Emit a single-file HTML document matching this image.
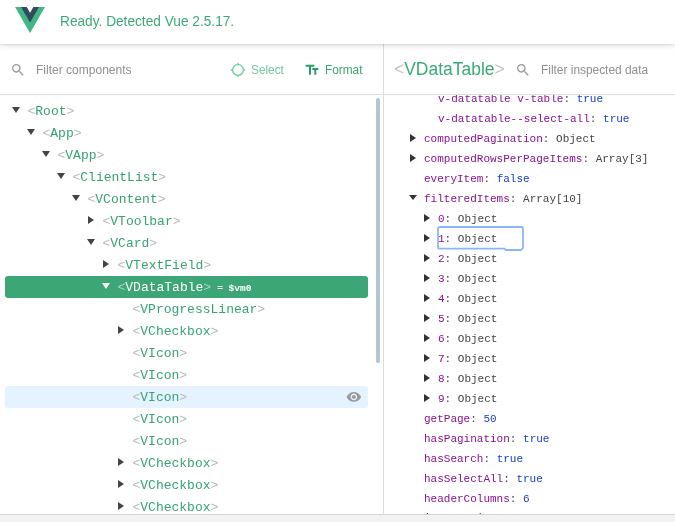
<!DOCTYPE html>
<html><head><meta charset="utf-8"><style>
*{margin:0;padding:0;box-sizing:border-box}
html,body{width:675px;height:522px;overflow:hidden;background:#fff}
body{position:relative;font-family:"Liberation Sans",sans-serif}
#wrap{position:absolute;left:0;top:0;width:675px;height:522px;will-change:transform;background:#fff}
.abs{position:absolute}
#hdr{position:absolute;left:0;top:0;width:675px;height:44px;background:#fff;box-shadow:0 1px 0 rgba(0,0,0,.04),0 0 7px rgba(0,0,0,.22);z-index:5}
#logo{position:absolute;left:15.3px;top:7px;width:30.1px;height:26px}
#ready{position:absolute;left:60px;top:11px;font-size:15px;line-height:20px;color:#3aab76;white-space:nowrap;transform:scaleX(.912);transform-origin:0 0}
.sx{position:absolute;white-space:nowrap;transform-origin:0 0;transform:scaleX(.91)}
.ph{color:#8f8f8f;font-size:13px;line-height:16px}
.ic{position:absolute;width:16px;height:16px}
#vline{position:absolute;left:383px;top:44px;width:1px;height:470px;background:#dcdcdc}
#hline{position:absolute;left:0;top:94px;width:675px;height:1px;background:#e0e0e0}
#tree{position:absolute;left:0;top:95px;width:383px;height:419px;overflow:hidden}
.row{position:absolute;left:5px;width:363px;height:22px;border-radius:3px;margin-top:-95px}
.sel{background:#3ca677}
.hov{background:#e5f2ff}
.nm{position:absolute;top:1px;margin-left:-5px;font-family:"Liberation Mono",monospace;font-size:13px;line-height:21px;color:#36a471;white-space:nowrap}
.nm b{font-weight:normal;color:#b8b8b8}
.sel .nm{color:#fff}
.sel .nm b{color:rgba(255,255,255,.55)}
.vm{font-size:9.5px;font-weight:bold;margin-left:6px;color:#fff;vertical-align:0}
.ad{position:absolute;top:7px;margin-left:-5px;width:0;height:0;border-left:4px solid transparent;border-right:4px solid transparent;border-top:6px solid #444}
.ar{position:absolute;top:6px;margin-left:-5px;width:0;height:0;border-top:4px solid transparent;border-bottom:4px solid transparent;border-left:6px solid #444}
.sel .ad{border-top-color:#fff}
.eye{position:absolute;left:341.3px;top:3.4px;width:15.8px;height:15.8px;fill:#9a9a9a}
#sb{position:absolute;left:376px;top:98px;width:4px;height:265px;border-radius:2px;background:#b3c5cf}
#data{position:absolute;left:384px;top:95px;width:291px;height:419px;overflow:hidden}
.drow{position:absolute;left:0;width:291px;height:20px;margin-top:-95px}
.dtx{position:absolute;top:0;margin-left:-384px;font-family:"Liberation Mono",monospace;font-size:11px;line-height:20px;white-space:pre}
.k{color:#881391}
.c{color:#444}
.v{color:#1a40c0}
.o{color:#444}
.dr{position:absolute;top:5.3px;margin-left:-384px;width:0;height:0;border-top:4px solid transparent;border-bottom:4px solid transparent;border-left:6px solid #333}
.dd{position:absolute;top:6px;margin-left:-384px;width:0;height:0;border-left:4px solid transparent;border-right:4px solid transparent;border-top:5.5px solid #333}
#bot{position:absolute;left:0;top:514px;width:675px;height:8px;background:#f2f2f2;border-top:1px solid #d4d4d4;z-index:6}
#focus{position:absolute;left:0;top:0;width:675px;height:522px;pointer-events:none}
</style></head><body><div id="wrap">
<div id="hdr">
<svg id="logo" viewBox="0 0 261.76 226.69"><path d="M161.096.001l-30.225 52.351L100.647.001H-.005l130.877 226.688L261.749.001z" fill="#41b883"/><path d="M161.096.001l-30.225 52.351L100.647.001H52.346l78.526 136.01L209.398.001z" fill="#34495e"/></svg>
<div id="ready">Ready. Detected Vue 2.5.17.</div>
</div>
<svg class="ic" style="left:9.9px;top:61.8px" viewBox="0 0 24 24" fill="#9a9a9a"><path d="M15.5 14h-.79l-.28-.27C15.41 12.59 16 11.11 16 9.5 16 5.91 13.09 3 9.5 3S3 5.91 3 9.5 5.91 16 9.5 16c1.61 0 3.09-.59 4.23-1.57l.27.28v.79l5 4.99L20.49 19l-4.99-5zm-6 0C7.01 14 5 11.990 5 9.5S7.01 5 9.5 5 14 7.01 14 9.5 11.99 14 9.5 14z"/></svg>
<div class="sx ph" style="left:36px;top:62px;transform:scaleX(.925)">Filter components</div>
<svg class="ic" style="left:230px;top:61.8px" viewBox="0 0 24 24" fill="#6fcaa0"><path d="M20.94 11c-.46-4.17-3.770-7.48-7.94-7.94V1h-2v2.060C6.83 3.52 3.52 6.83 3.06 11H1v2h2.06c.46 4.17 3.77 7.48 7.94 7.94V23h2v-2.06c4.17-.46 7.48-3.77 7.94-7.94H23v-2h-2.06zM12 19c-3.87 0-7-3.13-7-7s3.13-7 7-7 7 3.13 7 7-3.13 7-7 7z"/></svg>
<div class="sx" style="left:250.5px;top:62px;font-size:13px;line-height:16px;color:#6fcaa0">Select</div>
<svg class="ic" style="left:304px;top:62.2px" viewBox="0 0 24 24" fill="#2a9f63"><path d="M2.5 4v3h5v12h3V7h5V4h-13zm19 5h-9v3h3v7h3v-7h3V9z"/></svg>
<div class="sx" style="left:324.5px;top:62px;font-size:13px;line-height:16px;color:#3aa570">Format</div>
<div id="vline"></div>
<div id="hline"></div>
<div class="abs" style="left:394px;top:58px;font-size:18px;line-height:22px;white-space:nowrap;color:#3aab76;transform:scaleX(.97);transform-origin:0 0"><span style="color:#c2c2c2">&lt;</span>VDataTable<span style="color:#c2c2c2">&gt;</span></div>
<svg class="ic" style="left:514.8px;top:61.8px" viewBox="0 0 24 24" fill="#9a9a9a"><path d="M15.5 14h-.79l-.28-.27C15.41 12.59 16 11.11 16 9.5 16 5.91 13.09 3 9.5 3S3 5.91 3 9.5 5.91 16 9.5 16c1.61 0 3.09-.59 4.23-1.57l.27.28v.79l5 4.99L20.49 19l-4.99-5zm-6 0C7.01 14 5 11.99 5 9.5S7.01 5 9.5 5 14 7.01 14 9.5 11.99 14 9.5 14z"/></svg>
<div class="sx ph" style="left:541px;top:62px;transform:scaleX(.915)">Filter inspected data</div>
<div id="tree">
<div class="row" style="top:100px"><i class="ad" style="left:12px"></i><span class="nm" style="left:27.5px"><b>&lt;</b>Root<b>&gt;</b></span></div><div class="row" style="top:122px"><i class="ad" style="left:27px"></i><span class="nm" style="left:42.5px"><b>&lt;</b>App<b>&gt;</b></span></div><div class="row" style="top:144px"><i class="ad" style="left:42px"></i><span class="nm" style="left:57.5px"><b>&lt;</b>VApp<b>&gt;</b></span></div><div class="row" style="top:166px"><i class="ad" style="left:57px"></i><span class="nm" style="left:72.5px"><b>&lt;</b>ClientList<b>&gt;</b></span></div><div class="row" style="top:188px"><i class="ad" style="left:72px"></i><span class="nm" style="left:87.5px"><b>&lt;</b>VContent<b>&gt;</b></span></div><div class="row" style="top:210px"><i class="ar" style="left:88px"></i><span class="nm" style="left:102.5px"><b>&lt;</b>VToolbar<b>&gt;</b></span></div><div class="row" style="top:232px"><i class="ad" style="left:87px"></i><span class="nm" style="left:102.5px"><b>&lt;</b>VCard<b>&gt;</b></span></div><div class="row" style="top:254px"><i class="ar" style="left:103px"></i><span class="nm" style="left:117.5px"><b>&lt;</b>VTextField<b>&gt;</b></span></div><div class="row sel" style="top:276px"><i class="ad" style="left:102px"></i><span class="nm" style="left:117.5px"><b>&lt;</b>VDataTable<b>&gt;</b><span class="vm">= $vm0</span></span></div><div class="row" style="top:298px"><span class="nm" style="left:132.5px"><b>&lt;</b>VProgressLinear<b>&gt;</b></span></div><div class="row" style="top:320px"><i class="ar" style="left:118px"></i><span class="nm" style="left:132.5px"><b>&lt;</b>VCheckbox<b>&gt;</b></span></div><div class="row" style="top:342px"><span class="nm" style="left:132.5px"><b>&lt;</b>VIcon<b>&gt;</b></span></div><div class="row" style="top:364px"><span class="nm" style="left:132.5px"><b>&lt;</b>VIcon<b>&gt;</b></span></div><div class="row hov" style="top:386px"><span class="nm" style="left:132.5px"><b>&lt;</b>VIcon<b>&gt;</b></span><svg class="eye" viewBox="0 0 24 24"><path d="M12 4.5C7 4.5 2.73 7.61 1 12c1.73 4.39 6 7.5 11 7.5s9.27-3.11 11-7.5c-1.73-4.39-6-7.5-11-7.5zM12 17c-2.76 0-5-2.24-5-5s2.24-5 5-5 5 2.24 5 5-2.24 5-5 5zm0-8c-1.66 0-3 1.34-3 3s1.34 3 3 3 3-1.34 3-3-1.34-3-3-3z"/></svg></div><div class="row" style="top:408px"><span class="nm" style="left:132.5px"><b>&lt;</b>VIcon<b>&gt;</b></span></div><div class="row" style="top:430px"><span class="nm" style="left:132.5px"><b>&lt;</b>VIcon<b>&gt;</b></span></div><div class="row" style="top:452px"><i class="ar" style="left:118px"></i><span class="nm" style="left:132.5px"><b>&lt;</b>VCheckbox<b>&gt;</b></span></div><div class="row" style="top:474px"><i class="ar" style="left:118px"></i><span class="nm" style="left:132.5px"><b>&lt;</b>VCheckbox<b>&gt;</b></span></div><div class="row" style="top:496px"><i class="ar" style="left:118px"></i><span class="nm" style="left:132.5px"><b>&lt;</b>VCheckbox<b>&gt;</b></span></div>
</div>
<div id="sb"></div>
<div id="data">
<div class="drow" style="top:89px"><div class="dtx" style="left:438px"><span class="k">v-datatable v-table</span><span class="c">: </span><span class="v">true</span></div></div><div class="drow" style="top:109px"><div class="dtx" style="left:438px"><span class="k">v-datatable--select-all</span><span class="c">: </span><span class="v">true</span></div></div><div class="drow" style="top:129px"><i class="dr" style="left:410px"></i><div class="dtx" style="left:424px"><span class="k">computedPagination</span><span class="c">: </span><span class="o">Object</span></div></div><div class="drow" style="top:149px"><i class="dr" style="left:410px"></i><div class="dtx" style="left:424px"><span class="k">computedRowsPerPageItems</span><span class="c">: </span><span class="o">Array[3]</span></div></div><div class="drow" style="top:169px"><div class="dtx" style="left:424px"><span class="k">everyItem</span><span class="c">: </span><span class="v">false</span></div></div><div class="drow" style="top:189px"><i class="dd" style="left:409px"></i><div class="dtx" style="left:424px"><span class="k">filteredItems</span><span class="c">: </span><span class="o">Array[10]</span></div></div><div class="drow" style="top:209px"><i class="dr" style="left:424px"></i><div class="dtx" style="left:438px"><span class="k">0</span><span class="c">: </span><span class="o">Object</span></div></div><div class="drow" style="top:229px"><i class="dr" style="left:424px"></i><div class="dtx" style="left:438px"><span class="k">1</span><span class="c">: </span><span class="o">Object</span></div></div><div class="drow" style="top:249px"><i class="dr" style="left:424px"></i><div class="dtx" style="left:438px"><span class="k">2</span><span class="c">: </span><span class="o">Object</span></div></div><div class="drow" style="top:269px"><i class="dr" style="left:424px"></i><div class="dtx" style="left:438px"><span class="k">3</span><span class="c">: </span><span class="o">Object</span></div></div><div class="drow" style="top:289px"><i class="dr" style="left:424px"></i><div class="dtx" style="left:438px"><span class="k">4</span><span class="c">: </span><span class="o">Object</span></div></div><div class="drow" style="top:309px"><i class="dr" style="left:424px"></i><div class="dtx" style="left:438px"><span class="k">5</span><span class="c">: </span><span class="o">Object</span></div></div><div class="drow" style="top:329px"><i class="dr" style="left:424px"></i><div class="dtx" style="left:438px"><span class="k">6</span><span class="c">: </span><span class="o">Object</span></div></div><div class="drow" style="top:349px"><i class="dr" style="left:424px"></i><div class="dtx" style="left:438px"><span class="k">7</span><span class="c">: </span><span class="o">Object</span></div></div><div class="drow" style="top:369px"><i class="dr" style="left:424px"></i><div class="dtx" style="left:438px"><span class="k">8</span><span class="c">: </span><span class="o">Object</span></div></div><div class="drow" style="top:389px"><i class="dr" style="left:424px"></i><div class="dtx" style="left:438px"><span class="k">9</span><span class="c">: </span><span class="o">Object</span></div></div><div class="drow" style="top:409px"><div class="dtx" style="left:424px"><span class="k">getPage</span><span class="c">: </span><span class="v">50</span></div></div><div class="drow" style="top:429px"><div class="dtx" style="left:424px"><span class="k">hasPagination</span><span class="c">: </span><span class="v">true</span></div></div><div class="drow" style="top:449px"><div class="dtx" style="left:424px"><span class="k">hasSearch</span><span class="c">: </span><span class="v">true</span></div></div><div class="drow" style="top:469px"><div class="dtx" style="left:424px"><span class="k">hasSelectAll</span><span class="c">: </span><span class="v">true</span></div></div><div class="drow" style="top:489px"><div class="dtx" style="left:424px"><span class="k">headerColumns</span><span class="c">: </span><span class="v">6</span></div></div><div class="drow" style="top:507.5px"><div class="dtx" style="left:424px"><span class="k">i       i</span></div></div>
</div>
<svg id="focus" viewBox="0 0 675 522"><path d="M440 227 H521 Q523 227 523 229 V248 L521 250 H506 L504.5 248.7 H440 Q438 248.7 438 246.7 V229 Q438 227 440 227 Z" fill="none" stroke="#8cb6fa" stroke-width="1.8"/></svg>
<div id="bot"></div>
</div></body></html>
